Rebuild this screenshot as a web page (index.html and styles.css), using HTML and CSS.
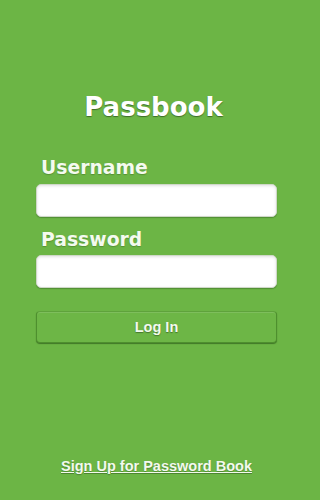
FILE: index.html
```html
<!DOCTYPE html>
<html>
<head>
<meta charset="utf-8">
<title>Passbook</title>
<link rel="stylesheet" href="styles.css">
</head>
<body>
<div class="page">
  <h1 class="title">Passbook</h1>
  <form class="form">
    <label class="label" for="u">Username</label>
    <input class="field" id="u" type="text">
    <label class="label label-pw" for="p">Password</label>
    <input class="field" id="p" type="password">
    <button class="btn" type="button">Log In</button>
  </form>
  <a class="signup" href="#">Sign Up for Password Book</a>
</div>
</body>
</html>
```
FILE: styles.css
```css
html, body {
  margin: 0;
  padding: 0;
  background: #6cb545;
  height: 100%;
}
.page {
  box-sizing: border-box;
  width: 313px;
  display: flex;
  flex-direction: column;
  padding: 90px 36px 0 36px;
}
.title {
  margin: 0;
  padding-right: 6px;
  font-family: "DejaVu Sans", Verdana, sans-serif;
  font-weight: bold;
  font-size: 26px;
  line-height: 34px;
  color: #ffffff;
  text-align: center;
  text-shadow: 0 1px 1px rgba(30, 60, 20, 0.6);
}
.form {
  display: flex;
  flex-direction: column;
  margin-top: 32px;
}
.label {
  font-family: "DejaVu Sans", Verdana, sans-serif;
  font-weight: bold;
  font-size: 18.8px;
  line-height: 24px;
  color: #f4faef;
  padding-left: 5px;
  margin-bottom: 4px;
  text-shadow: 0 1px 1px rgba(40, 80, 20, 0.35);
}
.label-pw {
  margin-top: 11px;
  margin-bottom: 3px;
}
.field {
  box-sizing: border-box;
  height: 33px;
  width: 100%;
  margin: 0;
  border: 1px solid #cfd8c8;
  border-radius: 5px;
  background: #ffffff;
  box-shadow: inset 0 1px 3px rgba(0, 0, 0, 0.12), 0 1px 1px rgba(30, 70, 20, 0.35);
  font-size: 15px;
  padding: 0 8px;
}
.btn {
  box-sizing: border-box;
  margin-top: 23px;
  height: 32px;
  width: 100%;
  border: 1px solid #4e8f2e;
  border-top-color: #5fa23c;
  border-radius: 4px;
  background: #6db646;
  box-shadow: 0 1px 1px rgba(30, 70, 15, 0.55), inset 0 1px 0 rgba(255, 255, 255, 0.12);
  font-family: "Liberation Sans", Arial, sans-serif;
  font-weight: bold;
  font-size: 14.5px;
  color: #f3f9ee;
  text-shadow: 0 1px 1px rgba(30, 60, 20, 0.5);
  padding: 0;
}
.signup {
  margin-top: 114px;
  align-self: center;
  font-family: "Liberation Sans", Arial, sans-serif;
  font-weight: bold;
  font-size: 14.5px;
  line-height: 18px;
  color: #f3f9ee;
  text-decoration: underline;
  text-shadow: 0 1px 1px rgba(30, 60, 20, 0.4);
}
```
